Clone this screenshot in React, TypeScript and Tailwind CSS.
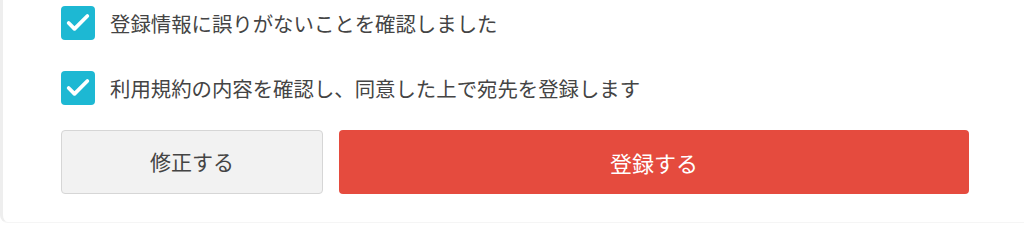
import { Check } from "lucide-react";

const font = { fontFamily: '"Noto Sans CJK JP", "Noto Sans", sans-serif' };

const CheckRow = ({ label }: { label: string }) => (
  <label className="flex items-center gap-[15px] h-[34px]">
    <span className="w-[34px] h-[34px] rounded-[4px] bg-[#1db8d3] flex items-center justify-center shrink-0">
      <Check className="w-[28px] h-[28px] text-white" strokeWidth={3.2} />
    </span>
    <span className="text-[20.4px] leading-none text-[#444]">{label}</span>
  </label>
);

const App = () => {
  return (
    <div className="w-[1024px] h-[225px] bg-white overflow-hidden" style={font}>
      <div className="h-[223px] border-l-[3px] border-b border-l-[#eeeeee] border-b-[#f5f5f5] rounded-bl-[8px] pl-[58px] pt-[6px]">
        <div className="flex flex-col gap-[31px]">
          <CheckRow label="登録情報に誤りがないことを確認しました" />
          <CheckRow label="利用規約の内容を確認し、同意した上で宛先を登録します" />
        </div>
        <div className="flex gap-[16px] mt-[25px]">
          <button className="w-[262px] h-[64px] rounded-[4px] border border-[#d6d6d6] bg-[#f2f2f2] text-[21px] text-[#444]">
            修正する
          </button>
          <button className="w-[630px] h-[64px] rounded-[4px] bg-[#e54b3e] text-[22px] text-white">
            登録する
          </button>
        </div>
      </div>
    </div>
  );
};

export default App;
